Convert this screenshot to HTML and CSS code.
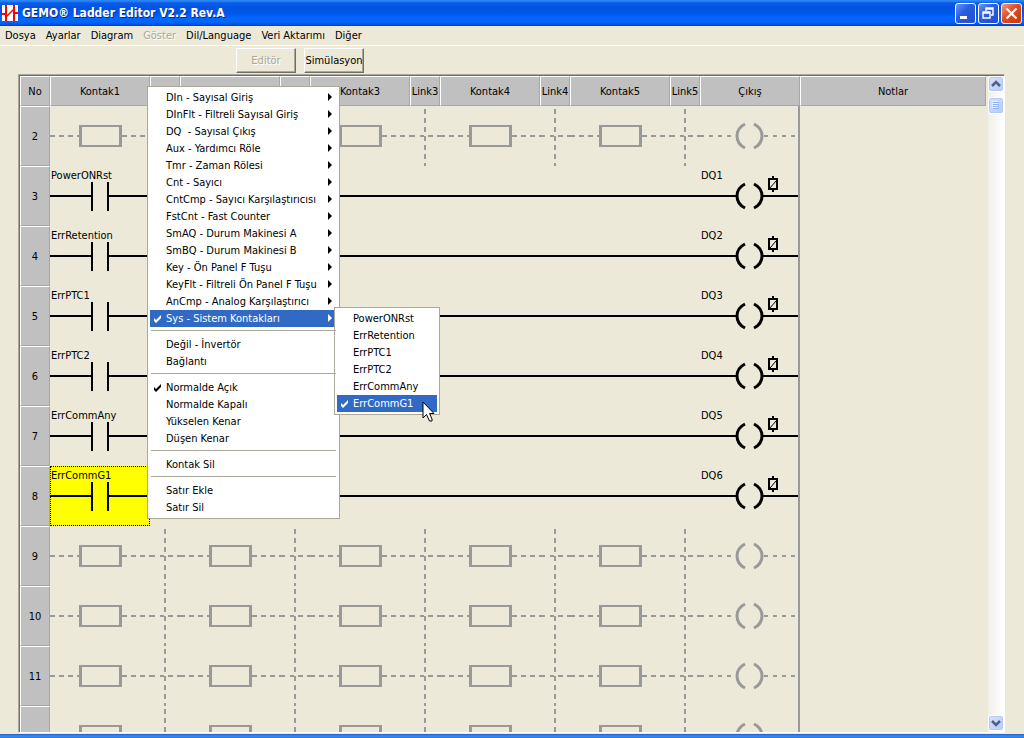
FILE: index.html
```html
<!DOCTYPE html>
<html lang="tr">
<head>
<meta charset="utf-8">
<title>GEMO® Ladder Editor V2.2 Rev.A</title>
<link rel="stylesheet" href="styles.css">
</head>
<body>
<svg class="symbols" aria-hidden="true">
  <symbol id="empty" viewBox="0 0 100 60"><path d="M0 30H30M72 30H100" stroke-width="2" stroke-dasharray="5 4"/><path d="M29 19H72V41H29ZM32 21V39H69V21Z" fill="#999" fill-rule="evenodd" stroke="none"/></symbol>
  <symbol id="emptylink" viewBox="0 0 30 60"><path d="M0 30H6M10 30H14M18 30H30M15 3V60" stroke-width="2" stroke-dasharray="5 4"/></symbol>
  <symbol id="contact" viewBox="0 0 100 60"><path d="M0 30H42M58 30H100M42 16V45M58 16V45" stroke-width="2"/></symbol>
  <symbol id="wire" viewBox="0 0 100 60"><path d="M0 30H100" stroke-width="2"/></symbol>
  <symbol id="wirelink" viewBox="0 0 30 60"><path d="M0 30H30" stroke-width="2"/></symbol>
  <symbol id="arcs" viewBox="0 0 100 60"><path d="M45 18Q37 22 37 30T45 42M54 18Q62 22 62 30T54 42" fill="none" stroke-width="3"/></symbol>
  <symbol id="emptycoil" viewBox="0 0 100 60"><path d="M0 30H37M64 30H98" stroke-width="2" stroke-dasharray="4 5"/><use href="#arcs"/></symbol>
  <symbol id="coil" viewBox="0 0 100 60"><path d="M0 30H36M62 30H98" stroke-width="2"/><use href="#arcs"/><path d="M69 13H77V23H69ZM73 10V13M73 23V26" fill="none" stroke-width="2"/><path d="M70 22L76 15" stroke-width="1"/></symbol>
  <symbol id="tick" viewBox="0 0 9 9"><path d="M1 3L3 5L8 0V3L3 8L1 6Z" fill="currentColor"/></symbol>
</svg>

<header class="titlebar">
  <svg class="logo" viewBox="0 0 16 16" aria-hidden="true"><path fill="#fff" d="M0 0h16v16H0z"/><path d="M4 0V16M12 0V16M0 9H4M12 8H16" fill="none" stroke="#f00" stroke-width="2"/><path d="M4 12L12 4" stroke="#f00" stroke-width="1.500"/></svg>
  <h1>GEMO® Ladder Editor V2.2 Rev.A</h1>
  <button class="winbtn" aria-label="Simge durumuna küçült"><svg viewBox="0 0 21 21"><path fill="#fff" d="M5 13h7v3H5z"/></svg></button>
  <button class="winbtn" aria-label="Önceki boyut"><svg viewBox="0 0 21 21"><path d="M5 9H12V15H5ZM5 10H12M8 8V5H15V12H13M8 6H15" fill="none" stroke="#fff" stroke-width="1.4"/></svg></button>
  <button class="winbtn close" aria-label="Kapat"><svg viewBox="0 0 21 21"><path d="M5.500 5.500L15.500 15.500M15.500 5.500L5.500 15.500" stroke="#fff" stroke-width="2.200"/></svg></button>
</header>

<nav class="menubar">
  <button>Dosya</button><button>Ayarlar</button><button>Diagram</button><button disabled>Göster</button><button>Dil/Language</button><button>Veri Aktarımı</button><button>Diğer</button>
</nav>

<div class="toolbar"><button disabled>Editör</button><button>Simülasyon</button></div>

<main class="editor">
  <div class="sheet">
    <table>
      <colgroup><col class="link"><col class="cell"><col class="link"><col class="cell"><col class="link"><col class="cell"><col class="link"><col class="cell"><col class="link"><col class="cell"><col class="link"><col class="cell"><col></colgroup>
      <thead><tr><th>No</th><th>Kontak1</th><th>Link1</th><th>Kontak2</th><th>Link2</th><th>Kontak3</th><th>Link3</th><th>Kontak4</th><th>Link4</th><th>Kontak5</th><th>Link5</th><th>Çıkış</th><th>Notlar</th></tr></thead>
      <tbody id="rungs"></tbody>
    </table>
  </div>
  <div class="scrollbar">
    <button aria-label="Yukarı"><svg viewBox="0 0 16 16"><path d="M4 10L8 6L12 10" fill="none" stroke="#4d6185" stroke-width="2.500"/></svg></button>
    <div class="thumb"><svg viewBox="0 0 16 17"><path d="M5 5.500H11M5 7.500H11M5 9.500H11M5 11.500H11" stroke="#8cb0f8"/><path d="M4 4.500H10M4 6.500H10M4 8.500H10M4 10.500H10" stroke="#eef4fe"/></svg></div>
    <button class="down" aria-label="Aşağı"><svg viewBox="0 0 16 16"><path d="M4 6L8 10L12 6" fill="none" stroke="#4d6185" stroke-width="2.500"/></svg></button>
  </div>
</main>
<footer class="frame"></footer>

<ul class="menu context" role="menu">
  <li class="more">DIn - Sayısal Giriş</li>
  <li class="more">DInFlt - Filtreli Sayısal Giriş</li>
  <li class="more">DQ&nbsp; - Sayısal Çıkış</li>
  <li class="more">Aux - Yardımcı Röle</li>
  <li class="more">Tmr - Zaman Rölesi</li>
  <li class="more">Cnt - Sayıcı</li>
  <li class="more">CntCmp - Sayıcı Karşılaştırıcısı</li>
  <li class="more">FstCnt - Fast Counter</li>
  <li class="more">SmAQ - Durum Makinesi A</li>
  <li class="more">SmBQ - Durum Makinesi B</li>
  <li class="more">Key - Ön Panel F Tuşu</li>
  <li class="more">KeyFlt - Filtreli Ön Panel F Tuşu</li>
  <li class="more">AnCmp - Analog Karşılaştırıcı</li>
  <li class="more active"><svg class="tick"><use href="#tick"/></svg>Sys - Sistem Kontakları
    <ul class="menu submenu" role="menu">
      <li>PowerONRst</li>
      <li>ErrRetention</li>
      <li>ErrPTC1</li>
      <li>ErrPTC2</li>
      <li>ErrCommAny</li>
      <li class="active"><svg class="tick"><use href="#tick"/></svg>ErrCommG1
        <svg class="cursor" viewBox="0 0 13 21" aria-hidden="true"><path d="M1 1V17L4.500 13.500L7.500 20H10V18L7.500 12.500H12Z" fill="#fff" stroke="#000"/></svg>
      </li>
    </ul>
  </li>
  <li class="sep" role="separator"></li>
  <li>Değil - İnvertör</li>
  <li>Bağlantı</li>
  <li class="sep" role="separator"></li>
  <li><svg class="tick"><use href="#tick"/></svg>Normalde Açık</li>
  <li>Normalde Kapalı</li>
  <li>Yükselen Kenar</li>
  <li>Düşen Kenar</li>
  <li class="sep" role="separator"></li>
  <li>Kontak Sil</li>
  <li class="sep" role="separator"></li>
  <li>Satır Ekle</li>
  <li>Satır Sil</li>
</ul>
<script src="app.js"></script>
</body>
</html>
```
FILE: styles.css
```css
* { box-sizing: border-box; }
body {
  margin: 0;
  height: 100vh;
  display: flex;
  flex-direction: column;
  overflow: hidden;
  background: #ece9d8;
  color: #000;
  font: 11px/17px "DejaVu Sans Condensed", "Noto Sans", sans-serif;
}
button { font: inherit; color: inherit; padding: 0; border: 0; background: none; }
ul { list-style: none; margin: 0; padding: 0; }
svg { display: block; }
.symbols { position: absolute; width: 0; height: 0; }

.titlebar {
  flex: none;
  display: flex;
  align-items: center;
  gap: 2px;
  height: 26px;
  padding: 0 2px;
  background: linear-gradient(#2a86f4 0, #2a86f4 1px, #0a5ce8 3px, #0054e3 8px, #0058ee 14px, #0066ff 18px, #0066ff 22px, #0050d8 25px, #003ab8);
}
.logo { width: 16px; height: 16px; }
.titlebar h1 {
  flex: 1;
  margin: 0;
  padding-left: 2px;
  color: #fff;
  font: bold 12px/26px "DejaVu Sans Condensed", sans-serif;
  text-shadow: 1px 1px #0a2a80;
}
.winbtn {
  width: 21px;
  height: 21px;
  border: 1px solid #fff;
  border-radius: 3px;
  background: linear-gradient(135deg, #6a96f4, #2a5fe0 40%, #1f4fd0);
}
.winbtn svg { width: 21px; height: 21px; margin: -1px; }
.winbtn.close { background: linear-gradient(135deg, #f09a80, #e04c20 45%, #c83808); }

.menubar {
  flex: none;
  display: flex;
  gap: 10px;
  height: 20px;
  padding-left: 5px;
  border-bottom: 1px solid #fff;
}
button:disabled { color: #aca899; text-shadow: 1px 1px #fff; }

.toolbar {
  flex: none;
  display: flex;
  gap: 8px;
  padding: 2px 0 1px 236px;
}
.toolbar button {
  width: 60px;
  height: 25px;
  border: 1px solid;
  border-color: #fff #716f64 #716f64 #fff;
  box-shadow: inset -1px -1px #aca899;
  font: 11px "DejaVu Sans Condensed", sans-serif;
  white-space: nowrap;
}

.editor {
  flex: 1;
  min-height: 0;
  display: flex;
  gap: 2px;
  margin: 0 19px 0 18px;
  padding: 1px 0 0 1px;
  border: 1px solid;
  border-color: #aca899 #fff #fff #aca899;
  box-shadow: inset 1px 1px #716f64;
}
.sheet { flex: 1; min-width: 0; overflow: hidden; }
table { width: 100%; table-layout: fixed; border-spacing: 0; }
col.link { width: 30px; }
col.cell { width: 100px; }
th, td { padding: 0; }
th {
  height: 60px;
  border: 1px solid;
  border-color: #fff #aca899 #aca899 #fff;
  background: #c0c0c0;
  font-weight: normal;
  text-align: center;
}
thead th { height: 30px; white-space: nowrap; }
td { position: relative; height: 60px; }
td svg { width: 100%; height: 60px; stroke: #999; }
td.live svg { stroke: #000; }
td.out { border-right: 2px solid #999; }
td.out svg { width: 100px; margin-right: -2px; }
td.picked { background: #ff0; outline: 1px dotted #000; outline-offset: -1px; }
.tag { position: absolute; top: 1px; left: 1px; }

.scrollbar {
  flex: none;
  width: 16px;
  display: flex;
  flex-direction: column;
  gap: 5px;
  padding-bottom: 1px;
  background: linear-gradient(90deg, #f0efe8, #fff);
}
.scrollbar button, .thumb {
  width: 16px;
  height: 16px;
  border: 1px solid #fff;
  border-radius: 3px;
  background: linear-gradient(135deg, #d6e2fe, #b8ccf8);
  box-shadow: inset 0 0 0 1px #b4c8f6;
}
.thumb { height: 17px; }
.scrollbar svg { width: 16px; margin: -1px; }
.scrollbar .down { margin-top: auto; }
.frame { flex: none; height: 5px; border-top: 1px solid #ece9d8; background: linear-gradient(#1f5fc4, #3b8cf0 50%, #2a78e0); }

.menu {
  position: absolute;
  padding: 2px;
  border: 1px solid #aca899;
  background: #fff;
  color: #000;
}
.context { left: 147px; top: 86px; width: 193px; }
.submenu { left: 184px; top: -3px; width: 106px; }
.menu li { position: relative; height: 17px; padding-left: 16px; white-space: nowrap; }
.menu li.active { background: #316ac5; color: #fff; }
.menu li.sep { height: 9px; padding: 3px 0 0; margin: 0 1px; }
.sep::before { content: ""; display: block; height: 1px; background: #aca899; }
.more::after {
  content: "";
  position: absolute;
  right: 5px;
  top: 4px;
  border: 4px solid transparent;
  border-left-color: currentColor;
  border-right: 0;
}
.tick { position: absolute; left: 3px; top: 5px; width: 9px; height: 9px; }
.cursor { position: absolute; left: 85px; top: 6px; width: 13px; height: 21px; z-index: 1; }
```
FILE: app.js
```javascript
const contacts = { 3: "PowerONRst", 4: "ErrRetention", 5: "ErrPTC1", 6: "ErrPTC2", 7: "ErrCommAny", 8: "ErrCommG1" };
const selected = 8;

function cell(symbol, cls, label) {
  const tag = label ? `<span class="tag">${label}</span>` : "";
  return `<td class="${cls}"><svg><use href="#${symbol}"/></svg>${tag}</td>`;
}

let html = "";
for (let n = 2; n <= 12; n++) {
  const name = contacts[n];
  html += `<tr><th scope="row">${n}</th>`;
  for (let k = 1; k <= 5; k++) {
    if (!name) html += cell("empty", "") + cell("emptylink", "");
    else if (k === 1) html += cell("contact", n === selected ? "live picked" : "live", name) + cell("wirelink", "live");
    else html += cell("wire", "live") + cell("wirelink", "live");
  }
  html += name ? cell("coil", "live out", "DQ" + (n - 2)) : cell("emptycoil", "out");
  html += "<td></td></tr>";
}
document.getElementById("rungs").innerHTML = html;
```
